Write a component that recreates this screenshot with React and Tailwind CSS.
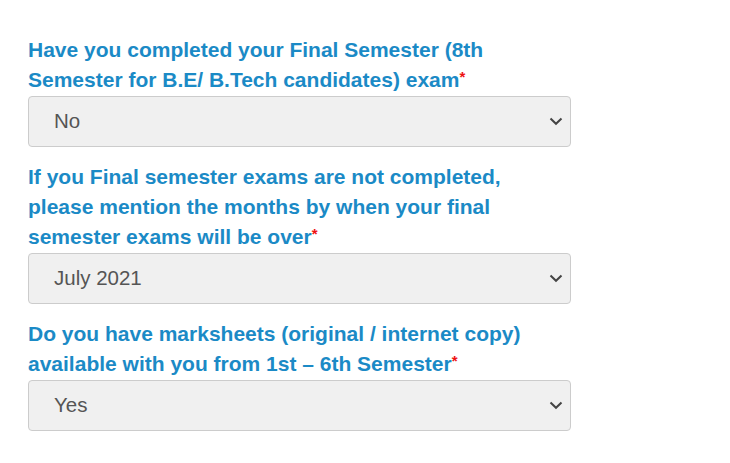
import React from "react";

function Chevron() {
  return (
    <svg width="14" height="9" viewBox="0 0 14 9" className="shrink-0">
      <path d="M1.5 1.5 L7 6.8 L12.5 1.5" fill="none" stroke="#444" strokeWidth="2" />
    </svg>
  );
}

function Field({ label, value }) {
  return (
    <div className="flex flex-col">
      <div className="text-[21px] leading-[30px] font-bold text-[#1b8ac6]">
        {label}
        <span className="text-[#e11] text-[15px] align-top relative top-[-3px]">*</span>
      </div>
      <div className="mt-px h-[51px] w-[543px] rounded-[4px] border border-[#cccccc] bg-[#f0f0f0] flex items-center justify-between pl-[25px] pr-[7px]">
        <span className="text-[20.5px] text-[#555555]">{value}</span>
        <Chevron />
      </div>
    </div>
  );
}

export default function App() {
  return (
    <div className="w-[730px] h-[463px] bg-white pl-[28px] pt-[35px] flex flex-col gap-[15px]" style={{ fontFamily: '"Liberation Sans", Arial, sans-serif' }}>
      <Field label={<>Have you completed your Final Semester (8th<br />Semester for B.E/ B.Tech candidates) exam</>} value="No" />
      <Field label={<>If you Final semester exams are not completed,<br />please mention the months by when your final<br />semester exams will be over</>} value="July 2021" />
      <Field label={<>Do you have marksheets (original / internet copy)<br />available with you from 1st – 6th Semester</>} value="Yes" />
    </div>
  );
}
